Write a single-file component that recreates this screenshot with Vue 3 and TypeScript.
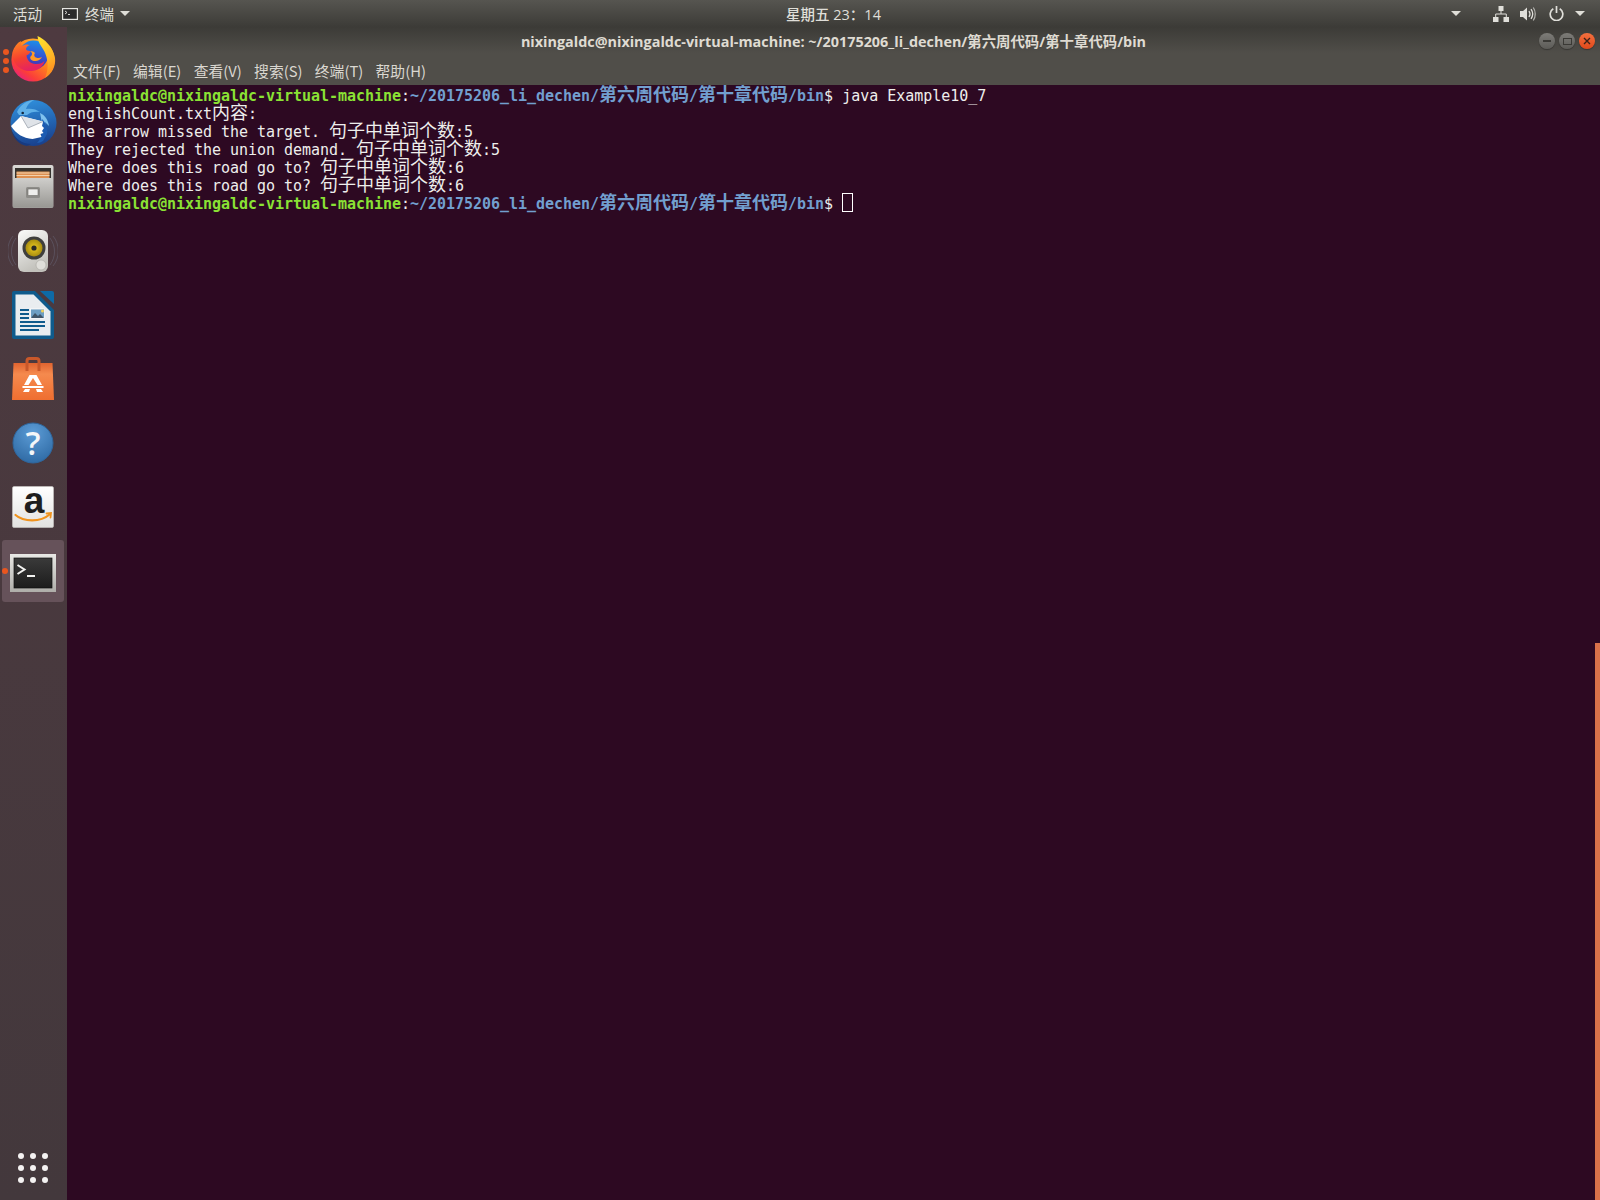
<script setup lang="ts">
interface Seg { t: string; c: string }
interface Run { t: string; c: string; cjk: boolean }

const prompt: Seg[] = [
  { t: 'nixingaldc@nixingaldc-virtual-machine', c: 'green' },
  { t: ':', c: 'white' },
  { t: '~/20175206_li_dechen/第六周代码/第十章代码/bin', c: 'blue' },
  { t: '$ ', c: 'white' },
]
const w = (t: string): Seg => ({ t, c: 'white' })

const rawLines: { segs: Seg[]; cursor?: boolean }[] = [
  { segs: [...prompt, w('java Example10_7')] },
  { segs: [w('englishCount.txt内容:')] },
  { segs: [w('The arrow missed the target. 句子中单词个数:5')] },
  { segs: [w('They rejected the union demand. 句子中单词个数:5')] },
  { segs: [w('Where does this road go to? 句子中单词个数:6')] },
  { segs: [w('Where does this road go to? 句子中单词个数:6')] },
  { segs: prompt, cursor: true },
]

function toRuns(segs: Seg[]): Run[] {
  const runs: Run[] = []
  for (const s of segs) {
    for (const part of s.t.split(/([\u4e00-\u9fff]+)/)) {
      if (part) runs.push({ t: part, c: s.c, cjk: /[\u4e00-\u9fff]/.test(part) })
    }
  }
  return runs
}
const lines = rawLines.map((l) => ({ runs: toRuns(l.segs), cursor: !!l.cursor }))
const menus = ['文件(F)', '编辑(E)', '查看(V)', '搜索(S)', '终端(T)', '帮助(H)']
const dots = Array.from({ length: 9 }, (_, i) => i)
</script>

<template>
  <div class="desktop">
    <header class="topbar">
      <div class="top-left">
        <span class="activities">活动</span>
        <span class="app">
          <svg class="mini" width="16" height="12" viewBox="0 0 16 12">
            <rect x="0.6" y="0.6" width="14.8" height="10.8" fill="#2b2b2b" stroke="#e6e6e2" stroke-width="1.2" />
            <path d="M3 3l2 1.500L3 6M6 6.500h2" stroke="#e6e6e2" fill="none" stroke-width="0.9" />
          </svg>
          <span class="app-name">终端</span>
          <i class="caret"></i>
        </span>
      </div>
      <div class="clock">星期五 23：14</div>
      <div class="tray">
        <i class="caret tray-first"></i>
        <svg class="net" width="16" height="16" viewBox="0 0 16 16">
          <path fill="#e0dfda" d="M5.500 0h5v5h-5zM0 11h5.500v5H0zM10.500 11H16v5h-5.500z" />
          <path fill="none" stroke="#e0dfda" d="M8 5v3M2.700 11V8h10.600v3" />
        </svg>
        <svg class="vol" width="16" height="16" viewBox="0 0 16 16">
          <path fill="#e0dfda" d="M0 5h3l4-3.500v13L3 11H0z" />
          <path fill="none" stroke="#e0dfda" stroke-width="1.300" d="M9 5c1.200 1.800 1.200 4.200 0 6M11 3.200c2 2.800 2 6.800 0 9.600" />
          <path fill="none" stroke="#b5b4af" stroke-width="1.200" d="M13.300 1.500c2.600 3.800 2.600 9.200 0 13" />
        </svg>
        <svg class="power" width="15" height="15" viewBox="0 0 15 15">
          <path fill="none" stroke="#e0dfda" stroke-width="1.700" d="M4.300 2.800a6.300 6.300 0 1 0 6.400 0" />
          <path stroke="#e0dfda" stroke-width="1.700" d="M7.500 0v7" />
        </svg>
        <i class="caret"></i>
      </div>
    </header>

    <div class="workspace">
      <aside class="dock">
        <div class="slot">
          <svg width="46" height="46" viewBox="0 0 46 46">
            <defs>
              <linearGradient id="ffBody" x1="0.85" y1="0.1" x2="0.2" y2="0.95">
                <stop offset="0" stop-color="#ffb52a" />
                <stop offset="0.45" stop-color="#ff7f1f" />
                <stop offset="0.8" stop-color="#fb3d3a" />
                <stop offset="1" stop-color="#e8227c" />
              </linearGradient>
              <linearGradient id="ffGlobe" x1="0.6" y1="0" x2="0.4" y2="1">
                <stop offset="0" stop-color="#1c8fe8" />
                <stop offset="0.55" stop-color="#3650d0" />
                <stop offset="1" stop-color="#53289e" />
              </linearGradient>
              <linearGradient id="ffFox" x1="0" y1="0" x2="0.3" y2="1">
                <stop offset="0" stop-color="#ff8c22" />
                <stop offset="0.6" stop-color="#f5402f" />
                <stop offset="1" stop-color="#e6245f" />
              </linearGradient>
              <linearGradient id="ffTail" x1="0.3" y1="0" x2="0.6" y2="1">
                <stop offset="0" stop-color="#ffe02e" />
                <stop offset="0.6" stop-color="#ffb326" />
                <stop offset="1" stop-color="#ff8520" />
              </linearGradient>
            </defs>
            <circle cx="23" cy="24" r="21.600" fill="url(#ffBody)" />
            <circle cx="23.500" cy="19" r="14.500" fill="url(#ffGlobe)" />
            <path fill="url(#ffFox)" d="M2.500 16C4 11 7 7 11 5c-.5 2 0 3.500 1 5 2-1.500 5-2 8-1-2.500 1-4 2.500-4 4 0 1 2 2 4 2 .5 2.500-1.500 3.500-3.500 4.500.5 5 4 8 9 8.500 4 .4 7-1 9-3-1.500 6-7 10-13 10C11 36 1 27 2.500 16z" />
            <path fill="#ff9a26" d="M20 15.500c3 1 2.500 3.500.5 5-1.300 2.500 2 5 5.500 4.500 3-.5 5.300-2.500 6-4-1.800 1-3.800 1.200-5.200.8-2.800-.8-3-3-2-4.300.7-1.200-2.800-3-4.800-2z" />
            <path fill="url(#ffTail)" d="M27.500 0C34 3 43 10 45 22c1 8-3 16-10 20 3.500-8 3.500-16 .5-24C33.500 12 28 8 27.500 0z" />
          </svg>
          <span class="pips"><i></i><i></i><i></i></span>
        </div>

        <div class="slot">
          <svg width="48" height="48" viewBox="0 0 48 48">
            <defs>
              <linearGradient id="tbBlue" x1="0.4" y1="0" x2="0.6" y2="1">
                <stop offset="0" stop-color="#2f8edb" />
                <stop offset="1" stop-color="#183f8c" />
              </linearGradient>
            </defs>
            <circle cx="24.500" cy="24" r="23" fill="url(#tbBlue)" />
            <path fill="#173a80" d="M2 30c3 9 11 15 20 15l-4 2c-8-1-14-8-16-17z" />
            <path fill="#5fb0e8" d="M8 13C11 6 18 1 25 1c-4 2-7 5-8 9 5-1 10 0 14 3-5-1-10 0-13 3L10 16z" />
            <path fill="#7fc2ee" d="M31 14c5 2 8 7 9 13l-4-4 1 6-4-5z" />
            <path fill="#1c5cb2" d="M33 20c4 4 6 9 5 15l-4 7c-2 1-4 2-6 2 5-5 7-14 5-24z" />
            <circle cx="13.700" cy="14" r="1.300" fill="#12283f" />
            <path fill="#ffffff" d="M2 27l10-10 22 5.500-1 4.500 2 2-2 3 1.500 2-3 1 1 3-9 2C14 39 7 35 2 27z" />
            <path fill="#dfe3e8" d="M12 17l22 5.500-15 6.500z" />
            <path fill="none" stroke="#8f98a3" stroke-width="0.700" d="M12 17l7 12 15-6.500" />
          </svg>
        </div>

        <div class="slot">
          <svg width="42" height="44" viewBox="0 0 42 44">
            <defs>
              <linearGradient id="fiBody" x1="0" y1="0" x2="0" y2="1">
                <stop offset="0" stop-color="#d9d8d5" />
                <stop offset="1" stop-color="#a4a3a0" />
              </linearGradient>
              <linearGradient id="fiFront" x1="0" y1="0" x2="0" y2="1">
                <stop offset="0" stop-color="#cfcecb" />
                <stop offset="1" stop-color="#989793" />
              </linearGradient>
            </defs>
            <rect x="0.500" y="0" width="41" height="43" rx="2" fill="url(#fiBody)" />
            <rect x="3" y="3" width="36" height="10" fill="#35322e" />
            <rect x="4.500" y="6.500" width="33" height="7" fill="#dd8f50" />
            <path d="M4.500 8h33M4.500 10.500h33" stroke="#f7e2c4" stroke-width="0.800" />
            <path fill="url(#fiFront)" d="M1 15l2-2h36l2 2v26.500a1 1 0 0 1-1 1H2a1 1 0 0 1-1-1z" />
            <rect x="14" y="22" width="14" height="11" rx="1.500" fill="#8d8c88" />
            <rect x="16" y="24" width="10" height="6.500" fill="#eeeeec" stroke="#6e6d69" stroke-width="0.600" />
          </svg>
        </div>

        <div class="slot">
          <svg width="50" height="44" viewBox="0 0 50 44">
            <defs>
              <linearGradient id="rbBody" x1="0" y1="0" x2="0.4" y2="1">
                <stop offset="0" stop-color="#fbfbfa" />
                <stop offset="1" stop-color="#c2c1bb" />
              </linearGradient>
              <radialGradient id="rbCone" cx="0.5" cy="0.5" r="0.5">
                <stop offset="0" stop-color="#4d4515" />
                <stop offset="0.3" stop-color="#d9b91c" />
                <stop offset="1" stop-color="#a88d10" />
              </radialGradient>
            </defs>
            <path fill="none" stroke="#7a859f" stroke-opacity="0.3" stroke-width="1" d="M8 9c-6 8-6 19 0 27M5 7C-2 15-2 29 5 37M42 9c6 8 6 19 0 27M45 7c7 8 7 22 0 30" />
            <rect x="10" y="1" width="30" height="42" rx="6" fill="url(#rbBody)" />
            <circle cx="26" cy="19" r="11.500" fill="#3f3f3d" />
            <circle cx="26" cy="19" r="8.500" fill="url(#rbCone)" />
            <circle cx="26" cy="19" r="2.600" fill="#2a2a26" />
            <circle cx="33" cy="36" r="5" fill="#dfded9" stroke="#a9a8a2" stroke-width="0.600" />
          </svg>
        </div>

        <div class="slot">
          <svg width="42" height="48" viewBox="0 0 42 48">
            <path fill="#0f5b8c" d="M2 0h21l19 19v27a2 2 0 0 1-2 2H2a2 2 0 0 1-2-2V2a2 2 0 0 1 2-2z" />
            <path fill="#0e6aa6" d="M28 0h12a2 2 0 0 1 2 2v11z" />
            <path fill="#e9edf0" d="M3.500 3.500h18L38.500 20.500v24h-35z" />
            <rect x="8" y="18" width="9" height="2" fill="#0f5b8c" />
            <rect x="8" y="22" width="9" height="2" fill="#0f5b8c" />
            <rect x="8" y="26" width="9" height="2" fill="#0f5b8c" />
            <rect x="8" y="30" width="25" height="2" fill="#0f5b8c" />
            <rect x="8" y="34" width="25" height="2" fill="#0f5b8c" />
            <rect x="8" y="38" width="19" height="2" fill="#0f5b8c" />
            <rect x="18.500" y="18" width="14" height="9" fill="#6d9ec2" stroke="#ffffff" stroke-width="0.800" />
            <path fill="#3f5568" d="M19 27l4-5 3 3 2-2 4 4z" />
            <circle cx="30.500" cy="20" r="1.500" fill="#f2d25a" />
          </svg>
        </div>

        <div class="slot">
          <svg width="42" height="44" viewBox="0 0 42 44">
            <defs>
              <linearGradient id="stBag" x1="0" y1="0" x2="0" y2="1">
                <stop offset="0" stop-color="#e0632f" />
                <stop offset="0.3" stop-color="#f58a4e" />
                <stop offset="1" stop-color="#ef6e30" />
              </linearGradient>
            </defs>
            <path fill="url(#stBag)" d="M1.500 6h39L42 43H0z" />
            <path fill="none" stroke="#c9582a" stroke-width="3" d="M15 14V4a2.500 2.500 0 0 1 2.500-2.500h7A2.500 2.500 0 0 1 27 4v10" />
            <path fill="#ffffff" d="M17.500 18h7l5.500 10h-4.500L21 21l-4.500 7H12z" />
            <path fill="#ffffff" d="M10.500 29h21v2h-21zM13 32h5l-1 3h-6zM24 32h5l2 3h-6z" />
          </svg>
        </div>

        <div class="slot">
          <svg class="marked" width="42" height="42" viewBox="0 0 42 42">
            <defs>
              <radialGradient id="hpBall" cx="0.5" cy="0.25" r="0.85">
                <stop offset="0" stop-color="#5c9cd6" />
                <stop offset="1" stop-color="#2a659f" />
              </radialGradient>
            </defs>
            <circle cx="21" cy="21" r="20" fill="url(#hpBall)" stroke="#2f669c" />
            <text x="21" y="33" text-anchor="middle" class="help-mark">?</text>
          </svg>
        </div>

        <div class="slot">
          <svg class="marked" width="42" height="42" viewBox="0 0 42 42">
            <defs>
              <linearGradient id="azBg" x1="0" y1="0" x2="0" y2="1">
                <stop offset="0" stop-color="#ffffff" />
                <stop offset="1" stop-color="#e2e2e0" />
              </linearGradient>
            </defs>
            <rect x="0.500" y="0.500" width="41" height="41" rx="1.500" fill="url(#azBg)" stroke="#c9c8c5" stroke-width="0.600" />
            <text x="22" y="27" text-anchor="middle" class="amazon-mark">a</text>
            <path fill="none" stroke="#f0931e" stroke-width="2.200" stroke-linecap="round" d="M3.500 29c8 7 25 7.500 34-.5" />
            <path fill="none" stroke="#f0931e" stroke-width="1.800" stroke-linecap="round" d="M34.500 27.500l4.500-.5-.5 4.500" />
          </svg>
        </div>

        <div class="slot active">
          <svg width="46" height="46" viewBox="0 0 46 46">
            <defs>
              <linearGradient id="tmFrame" x1="0" y1="0" x2="0" y2="1">
                <stop offset="0" stop-color="#e8e8e5" />
                <stop offset="1" stop-color="#aeada9" />
              </linearGradient>
              <linearGradient id="tmScreen" x1="0" y1="0" x2="0" y2="1">
                <stop offset="0" stop-color="#3a3a3a" />
                <stop offset="1" stop-color="#1c1c1c" />
              </linearGradient>
            </defs>
            <rect x="0" y="6" width="46" height="38" fill="url(#tmFrame)" />
            <rect x="4" y="10" width="38" height="30" fill="url(#tmScreen)" stroke="#111111" stroke-width="0.700" />
            <path fill="none" stroke="#f2f2f0" stroke-width="2" d="M7.500 17l7 4.500-7 4.500" />
            <path stroke="#f2f2f0" stroke-width="2" d="M17 28h8" />
          </svg>
          <i class="run-pip"></i>
        </div>

        <div class="grid-btn">
          <i v-for="d in dots" :key="d"></i>
        </div>
      </aside>

      <section class="window">
        <div class="titlebar">
          <div class="title-row">
            <span class="title">nixingaldc@nixingaldc-virtual-machine: ~/20175206_li_dechen/第六周代码/第十章代码/bin</span>
            <div class="win-btns">
              <span class="wbtn"><i class="w-min"></i></span>
              <span class="wbtn"><i class="w-max"></i></span>
              <span class="wbtn close">
                <svg width="8" height="8" viewBox="0 0 8 8">
                  <path stroke="#3c2118" stroke-width="1.400" d="M1 1l6 6M7 1L1 7" />
                </svg>
              </span>
            </div>
          </div>
          <nav class="menubar">
            <span v-for="m in menus" :key="m" class="menu">{{ m }}</span>
          </nav>
        </div>
        <main class="terminal">
          <div v-for="(l, i) in lines" :key="i" class="row">
            <span v-for="(r, j) in l.runs" :key="j" :class="[r.c, { cjk: r.cjk }]">{{ r.t }}</span>
            <i v-if="l.cursor" class="cursor"></i>
          </div>
          <div class="scroll-mark"></div>
        </main>
      </section>
    </div>
  </div>
</template>

<style>
html, body { margin: 0; padding: 0; background: #2d0922; }
</style>

<style scoped>
.desktop {
  width: 1600px;
  height: 1200px;
  display: flex;
  flex-direction: column;
  overflow: hidden;
  font-family: "Noto Sans CJK SC", "Noto Sans", sans-serif;
}
.topbar {
  height: 27px;
  flex: none;
  position: relative;
  display: flex;
  align-items: center;
  justify-content: space-between;
  background: linear-gradient(#565550, #3c3b37);
  color: #dfded8;
  font-size: 14.500px;
}
.top-left { display: flex; align-items: center; padding-left: 13px; }
.activities { width: 49px; line-height: 27px; }
.app { display: flex; align-items: center; }
.mini { margin-right: 7px; }
.app-name { line-height: 27px; margin-right: 6px; }
.caret {
  display: block;
  width: 0;
  height: 0;
  border-left: 5px solid transparent;
  border-right: 5px solid transparent;
  border-top: 5px solid #dfded8;
}
.clock {
  position: absolute;
  left: 786px;
  top: 0;
  line-height: 27px;
  padding-top: 1px;
  font-size: 14.500px;
  font-weight: 500;
  font-family: "Open Sans", "Noto Sans CJK SC", sans-serif;
  white-space: nowrap;
}
.tray { display: flex; align-items: center; padding-right: 15px; }
.tray-first { margin-right: 32px; }
.net { margin-right: 11px; }
.vol { margin-right: 13px; }
.power { margin-right: 11px; }

.workspace { flex: 1; display: flex; min-height: 0; }
.dock {
  width: 67px;
  flex: none;
  box-sizing: border-box;
  padding: 1px 3px 0 2px;
  display: flex;
  flex-direction: column;
  align-items: stretch;
  gap: 2px;
  background: linear-gradient(#4e3a40, #43383c);
}
.slot {
  height: 62px;
  flex: none;
  position: relative;
  display: flex;
  align-items: center;
  justify-content: center;
  border-radius: 3px;
}
.slot.active { background: #66525a; }
.marked { overflow: visible; }
.pips {
  position: absolute;
  left: 1px;
  top: 21px;
  display: flex;
  flex-direction: column;
  gap: 3px;
}
.pips i, .run-pip {
  display: block;
  width: 6px;
  height: 6px;
  border-radius: 50%;
  background: #e9561f;
}
.run-pip { position: absolute; left: 0; top: 28px; }
.help-mark {
  font: 600 33px "Open Sans", sans-serif;
  fill: #f4f6f8;
}
.amazon-mark {
  font: bold 37px "Liberation Sans", sans-serif;
  fill: #1e1e1e;
}
.grid-btn {
  margin-top: auto;
  margin-bottom: 17px;
  align-self: center;
  display: grid;
  grid-template-columns: repeat(3, 6px);
  grid-template-rows: repeat(3, 6px);
  gap: 6px;
}
.grid-btn i { display: block; border-radius: 50%; background: #f4f2f2; }

.window { flex: 1; min-width: 0; display: flex; flex-direction: column; }
.titlebar {
  height: 58px;
  flex: none;
  display: flex;
  flex-direction: column;
  background: linear-gradient(#3c3b37, #504e49 45%, #504e49);
}
.title-row {
  height: 27px;
  flex: none;
  position: relative;
  display: flex;
  align-items: center;
  justify-content: center;
}
.title {
  font-family: "Open Sans", "Noto Sans CJK SC", sans-serif;
  font-weight: 700;
  font-size: 14.400px;
  color: #dfdbd2;
}
.win-btns {
  position: absolute;
  right: 5px;
  top: 6px;
  display: flex;
  gap: 4px;
}
.wbtn {
  width: 16px;
  height: 16px;
  border-radius: 50%;
  display: flex;
  align-items: center;
  justify-content: center;
  background: linear-gradient(#7d7c78, #5c5b57);
  box-shadow: 0 1px 1px rgba(0, 0, 0, 0.3);
}
.wbtn.close { background: linear-gradient(#f4703f, #e0481a); }
.w-min { display: block; width: 8px; height: 1.500px; background: #3a3935; }
.w-max { display: block; width: 7px; height: 5px; border: 1px solid #3a3935; }
.menubar {
  flex: 1;
  display: flex;
  align-items: center;
  gap: 12.300px;
  padding-left: 6px;
}
.menu { font-size: 14.800px; color: #dad7d0; line-height: 1; padding-top: 3px; }

.terminal {
  flex: 1;
  position: relative;
  box-sizing: border-box;
  padding: 0 0 0 1px;
  background: #2d0922;
  font-family: "DejaVu Sans Mono", monospace;
  font-size: 15px;
  letter-spacing: -0.030px;
}
.row {
  height: 18px;
  line-height: 16px;
  white-space: pre;
  display: flex;
  align-items: baseline;
}
.cjk {
  font-family: "Noto Sans CJK SC", sans-serif;
  font-size: 18px;
  line-height: 16px;
  letter-spacing: 0;
}
.green { color: #8ae234; font-weight: 700; }
.blue { color: #729fcf; font-weight: 700; }
.white { color: #eeeeec; }
.cursor {
  display: block;
  align-self: flex-start;
  box-sizing: border-box;
  width: 11px;
  height: 19px;
  border: 1px solid #ffffff;
}
.scroll-mark {
  position: absolute;
  right: 0;
  top: 558px;
  bottom: 0;
  width: 5px;
  background: #d9714a;
}
</style>
